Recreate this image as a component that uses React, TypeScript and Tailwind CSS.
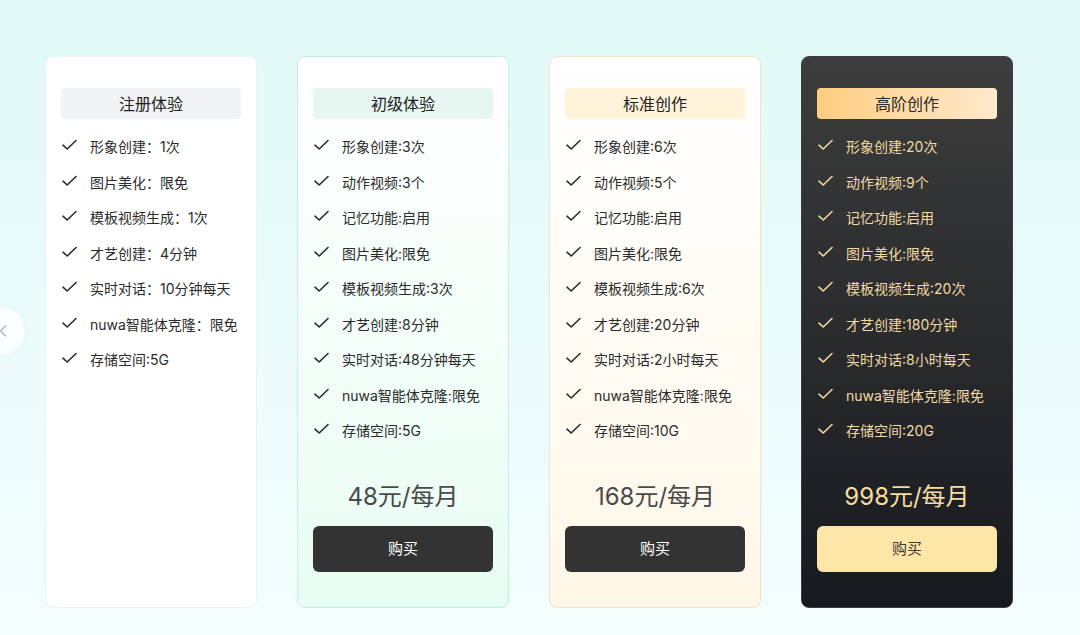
import { ChevronLeft } from 'lucide-react';

interface Plan {
  title: string;
  features: string[];
  price?: string;
  variant: 'plain' | 'green' | 'gold' | 'dark';
}

const PLANS: Plan[] = [
  {
    title: '注册体验',
    variant: 'plain',
    features: ['形象创建：1次', '图片美化：限免', '模板视频生成：1次', '才艺创建：4分钟', '实时对话：10分钟每天', 'nuwa智能体克隆：限免', '存储空间:5G'],
  },
  {
    title: '初级体验',
    variant: 'green',
    price: '48元/每月',
    features: ['形象创建:3次', '动作视频:3个', '记忆功能:启用', '图片美化:限免', '模板视频生成:3次', '才艺创建:8分钟', '实时对话:48分钟每天', 'nuwa智能体克隆:限免', '存储空间:5G'],
  },
  {
    title: '标准创作',
    variant: 'gold',
    price: '168元/每月',
    features: ['形象创建:6次', '动作视频:5个', '记忆功能:启用', '图片美化:限免', '模板视频生成:6次', '才艺创建:20分钟', '实时对话:2小时每天', 'nuwa智能体克隆:限免', '存储空间:10G'],
  },
  {
    title: '高阶创作',
    variant: 'dark',
    price: '998元/每月',
    features: ['形象创建:20次', '动作视频:9个', '记忆功能:启用', '图片美化:限免', '模板视频生成:20次', '才艺创建:180分钟', '实时对话:8小时每天', 'nuwa智能体克隆:限免', '存储空间:20G'],
  },
];

const CARD_STYLES = {
  plain: {
    card: 'bg-white border border-[#eaf2f2]',
    title: 'bg-[#f2f3f5] text-[#222]',
    text: 'text-[#2b2b2b]',
    price: 'text-[#4a4a4a]',
    button: 'bg-[#333333] text-white',
  },
  green: {
    card: 'bg-gradient-to-b from-white to-[#e7fdf2] border border-[#c6ede2]',
    title: 'bg-[#e7f6f1] text-[#222]',
    text: 'text-[#2b2b2b]',
    price: 'text-[#4a4a4a]',
    button: 'bg-[#333333] text-white',
  },
  gold: {
    card: 'bg-gradient-to-b from-white to-[#fff7e8] border border-[#f1e3c8]',
    title: 'bg-[#fff3da] text-[#222]',
    text: 'text-[#2b2b2b]',
    price: 'text-[#4a4a4a]',
    button: 'bg-[#333333] text-white',
  },
  dark: {
    card: 'bg-gradient-to-b from-[#3d3d3d] to-[#171a1e] border border-[#3d3d3d]',
    title: 'bg-gradient-to-r from-[#ffcd7f] to-[#ffe9cc] text-[#2a2a2a]',
    text: 'text-[#f3d9a3]',
    price: 'text-[#f7dca2]',
    button: 'bg-[#ffe5a7] text-[#3a3a3a]',
  },
};

function Check() {
  return (
    <svg width="15" height="12" viewBox="0 0 15 12" fill="none" className="shrink-0">
      <path d="M1 6.2 L5.2 10 L14 1.5" stroke="currentColor" strokeWidth="1.6" strokeLinecap="round" strokeLinejoin="round" />
    </svg>
  );
}

function PlanCard({ plan }: { plan: Plan }) {
  const s = CARD_STYLES[plan.variant];
  return (
    <div className={`w-[212px] h-[552px] rounded-lg flex flex-col px-[15px] pt-[31px] pb-[35px] ${s.card}`}>
      <div className={`h-[31px] rounded flex items-center justify-center text-[16px] ${s.title}`}>{plan.title}</div>
      <div className={`mt-[10px] flex flex-col ${s.text}`}>
        {plan.features.map((f) => (
          <div key={f} className="h-[35.5px] flex items-center">
            <span className="w-[29px] pl-[1px] -mt-[3px]">
              <Check />
            </span>
            <span className="text-[14px]">{f}</span>
          </div>
        ))}
      </div>
      {plan.price && (
        <div className="mt-auto flex flex-col">
          <div className={`text-center text-[24px] leading-8 ${s.price}`}>{plan.price}</div>
          <button className={`mt-[13px] h-[46px] rounded-md text-[15px] ${s.button}`}>购买</button>
        </div>
      )}
    </div>
  );
}

export default function App() {
  return (
    <div
      className="relative w-[1080px] h-[635px] overflow-hidden bg-gradient-to-b from-[#e0f9f7] to-[#f3fefd]"
      style={{ fontFamily: 'Inter, "Noto Sans CJK SC", sans-serif' }}
    >
      <div className="flex gap-10 pl-[45px] pt-[56px]">
        {PLANS.map((p) => (
          <PlanCard key={p.title} plan={p} />
        ))}
      </div>
      <div className="absolute left-[-23px] top-[307px] w-12 h-12 rounded-full bg-white/70 shadow-[0_0_6px_rgba(0,0,0,0.04)] flex items-center justify-end pr-[12px]">
        <ChevronLeft size={20} strokeWidth={1.6} className="text-[#b0b4b6]" />
      </div>
    </div>
  );
}
